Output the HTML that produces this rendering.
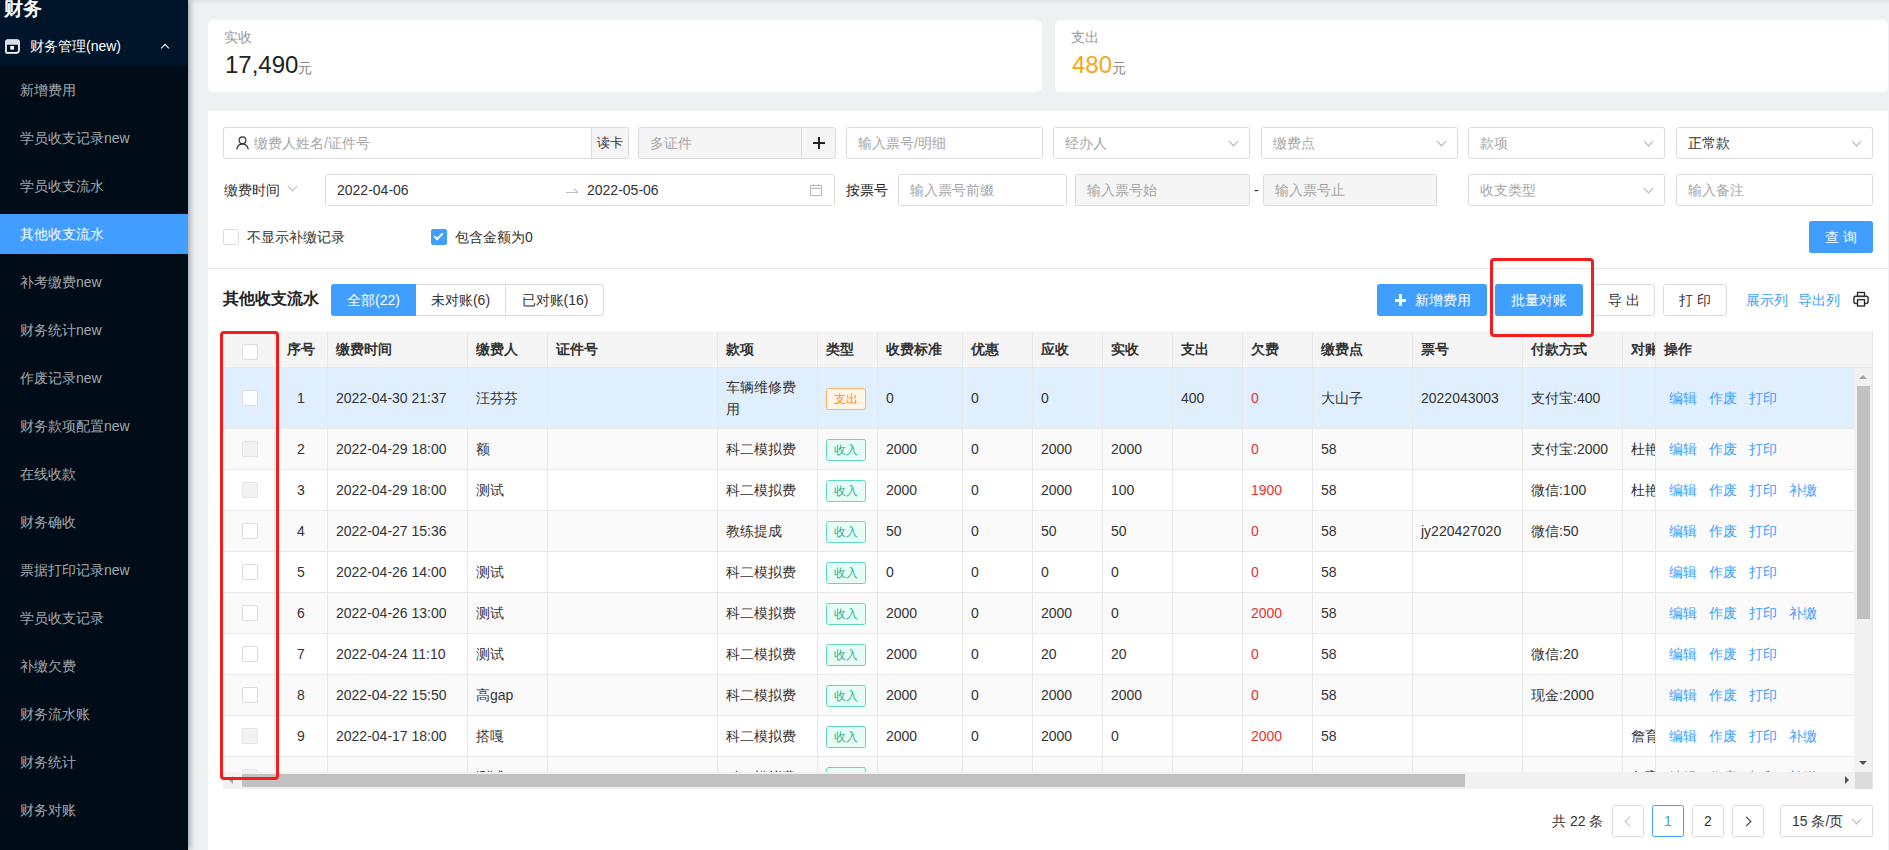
<!DOCTYPE html><html><head><meta charset="utf-8"><style>
*{box-sizing:border-box;margin:0;padding:0}
html,body{width:1889px;height:850px;overflow:hidden}
body{position:relative;background:#eef1f2;font-family:"Liberation Sans",sans-serif;font-size:14px;color:#333}
.abs{position:absolute}
#side{position:absolute;left:0;top:0;width:188px;height:850px;background:#000c17;box-shadow:2px 0 6px rgba(0,21,41,.35);z-index:5}
#side .hd{position:absolute;left:0;top:0;width:188px;height:66px;background:#001529}
.mi{position:absolute;left:0;width:188px;height:40px;line-height:40px;padding-left:20px;color:rgba(255,255,255,.65);font-size:14px;white-space:nowrap}
.mi.on{background:#419dff;color:#fff}
.card{position:absolute;top:20px;height:72px;background:#fff;border-radius:6px}
.card .lb{position:absolute;left:16px;top:9px;font-size:14px;color:#999;line-height:16px}
.card .val{position:absolute;left:17px;top:31px;font-size:24px;line-height:28px;color:#222}
.card .val small{font-size:14px;color:#888}
#panel{position:absolute;left:208px;top:111px;width:1680px;height:739px;background:#fff}
.inp{position:absolute;height:32px;border:1px solid #dcdcdc;border-radius:2.5px;background:#fff;font-size:14px;line-height:30px;padding-left:11px;color:#a6a6a6;white-space:nowrap;overflow:hidden}
.inp.dis{background:#f5f5f5;border-color:#dcdcdc}
.inp.val{color:#333}
.chev{position:absolute;right:12px;top:10px;width:7px;height:7px;border-right:1px solid #b4b4b4;border-bottom:1px solid #b4b4b4;transform:rotate(45deg)}
.btn{position:absolute;height:32px;border-radius:2.5px;font-size:14px;line-height:32px;text-align:center;white-space:nowrap}
.btn.p{background:#409eff;color:#fff}
.btn.d{border:1px solid #dcdcdc;background:#fff;color:#333;line-height:30px}
.cb{position:absolute;width:16px;height:16px;border:1px solid #dcdcdc;border-radius:2px;background:#fff}
.red{position:absolute;border:3px solid #f41c1c;border-radius:4px;z-index:20}
.tcell{position:absolute;white-space:nowrap;overflow:hidden}
.link{color:#409eff}
.tag{display:inline-block;width:40px;height:22px;line-height:20px;font-size:12px;text-align:center;border:1px solid;border-radius:2.5px}
.tag.o{color:#ff8a1c;background:#fff6e8;border-color:#ffb26b}
.tag.g{color:#1db39a;background:#e8fcf6;border-color:#5fd9bf}
</style></head><body>
<div id="side"><div class="hd"></div>
<div class="abs" style="left:4px;top:-2px;font-size:19px;font-weight:bold;color:#fff;line-height:22px">财务</div>
<svg class="abs" style="left:5px;top:39px" width="15" height="15" viewBox="0 0 15 15"><path d="M1 3 Q1 1.2 2.8 1.2 L12.2 1.2 Q14 1.2 14 3 L14 11 Q14 13.8 11.2 13.8 L1.9 13.8 Q1 13.8 1 12.9 Z" fill="none" stroke="#fff" stroke-width="1.7"/><rect x="0.5" y="1" width="14" height="4.8" rx="1.5" fill="#dcdde3"/><rect x="5.3" y="7" width="3.6" height="3.6" fill="#fff"/></svg>
<div class="abs" style="left:30px;top:37px;font-size:14px;line-height:18px;color:#fff;white-space:nowrap">财务管理(new)</div>
<div class="abs" style="left:162px;top:45px;width:6px;height:6px;border-left:1.8px solid #fff;border-top:1.8px solid #fff;transform:rotate(45deg)"></div>
<div class="mi" style="top:70px">新增费用</div>
<div class="mi" style="top:118px">学员收支记录new</div>
<div class="mi" style="top:166px">学员收支流水</div>
<div class="mi on" style="top:214px">其他收支流水</div>
<div class="mi" style="top:262px">补考缴费new</div>
<div class="mi" style="top:310px">财务统计new</div>
<div class="mi" style="top:358px">作废记录new</div>
<div class="mi" style="top:406px">财务款项配置new</div>
<div class="mi" style="top:454px">在线收款</div>
<div class="mi" style="top:502px">财务确收</div>
<div class="mi" style="top:550px">票据打印记录new</div>
<div class="mi" style="top:598px">学员收支记录</div>
<div class="mi" style="top:646px">补缴欠费</div>
<div class="mi" style="top:694px">财务流水账</div>
<div class="mi" style="top:742px">财务统计</div>
<div class="mi" style="top:790px">财务对账</div>
</div>
<div class="abs" style="left:188px;top:0;width:1701px;height:5px;background:linear-gradient(rgba(0,0,0,.06),rgba(0,0,0,0))"></div>
<div class="card" style="left:208px;width:834px"><div class="lb">实收</div><div class="val">17,490<small>元</small></div></div>
<div class="card" style="left:1055px;width:833px"><div class="lb">支出</div><div class="val" style="color:#f5a814">480<small>元</small></div></div>
<div id="panel"></div>
<div class="abs" style="left:208px;top:268px;width:1680px;height:1px;background:#e8e8e8"></div>
<div class="inp" style="left:223px;top:127px;width:406px;padding-left:30px">缴费人姓名/证件号</div>
<svg class="abs" style="left:236px;top:136px" width="13" height="14" viewBox="0 0 13 14"><circle cx="6.5" cy="4.2" r="3.4" fill="none" stroke="#333" stroke-width="1.2"/><path d="M0.8 13.5 C1.2 9.6 3.5 8.2 6.5 8.2 C9.5 8.2 11.8 9.6 12.2 13.5" fill="none" stroke="#333" stroke-width="1.2"/></svg>
<div class="abs" style="left:591px;top:128px;width:37px;height:30px;background:#f5f5f5;border-left:1px solid #dcdcdc;font-size:13px;line-height:30px;text-align:center;color:#333;border-radius:0 3px 3px 0">读卡</div>
<div class="inp dis" style="left:638px;top:127px;width:198px">多证件</div>
<div class="abs" style="left:801px;top:128px;width:34px;height:30px;background:#f5f5f5;border-left:1px solid #dcdcdc;border-radius:0 3px 3px 0"><div class="abs" style="left:11px;top:14px;width:12px;height:2px;background:#222"></div><div class="abs" style="left:16px;top:9px;width:2px;height:12px;background:#222"></div></div>
<div class="inp" style="left:846px;top:127px;width:197px">输入票号/明细</div>
<div class="inp" style="left:1053px;top:127px;width:197px">经办人<div class="chev"></div></div>
<div class="inp" style="left:1261px;top:127px;width:197px">缴费点<div class="chev"></div></div>
<div class="inp" style="left:1468px;top:127px;width:197px">款项<div class="chev"></div></div>
<div class="inp val" style="left:1676px;top:127px;width:197px">正常款<div class="chev"></div></div>
<div class="abs" style="left:224px;top:181px;font-size:14px;line-height:18px;color:#333">缴费时间</div>
<div class="abs" style="left:289px;top:183px;width:7px;height:7px;border-right:1px solid #bbb;border-bottom:1px solid #bbb;transform:rotate(45deg)"></div>
<div class="inp val" style="left:325px;top:174px;width:510px"><span class="abs" style="left:11px">2022-04-06</span><svg class="abs" style="left:239px;top:12px" width="14" height="8" viewBox="0 0 14 8"><path d="M1 5.5 H13 M9 1.8 L13 5.5" fill="none" stroke="#bdbdbd" stroke-width="1.1"/></svg><span class="abs" style="left:261px">2022-05-06</span></div>
<svg class="abs" style="left:809px;top:183px" width="14" height="14" viewBox="0 0 14 14"><rect x="1.5" y="2.5" width="11" height="10" fill="none" stroke="#bbb" stroke-width="1"/><line x1="1.5" y1="5.5" x2="12.5" y2="5.5" stroke="#bbb"/><line x1="4.5" y1="1" x2="4.5" y2="3.5" stroke="#bbb"/><line x1="9.5" y1="1" x2="9.5" y2="3.5" stroke="#bbb"/></svg>
<div class="abs" style="left:846px;top:181px;font-size:14px;line-height:18px;color:#222">按票号</div>
<div class="inp" style="left:898px;top:174px;width:169px">输入票号前缀</div>
<div class="inp dis" style="left:1075px;top:174px;width:175px">输入票号始</div>
<div class="abs" style="left:1254px;top:181px;font-size:14px;line-height:18px;color:#333">-</div>
<div class="inp dis" style="left:1263px;top:174px;width:174px">输入票号止</div>
<div class="inp" style="left:1468px;top:174px;width:197px">收支类型<div class="chev"></div></div>
<div class="inp" style="left:1676px;top:174px;width:197px">输入备注</div>
<div class="cb" style="left:223px;top:229px"></div>
<div class="abs" style="left:247px;top:228px;line-height:18px;color:#333">不显示补缴记录</div>
<div class="cb" style="left:431px;top:229px;background:#409eff;border-color:#409eff"><div class="abs" style="left:4px;top:1px;width:5px;height:9px;border-right:2px solid #fff;border-bottom:2px solid #fff;transform:rotate(45deg)"></div></div>
<div class="abs" style="left:455px;top:228px;line-height:18px;color:#333">包含金额为0</div>
<div class="btn p" style="left:1809px;top:221px;width:64px;letter-spacing:4px;text-indent:4px">查询</div>
<div class="abs" style="left:223px;top:289px;font-size:16px;font-weight:bold;line-height:20px;color:#222">其他收支流水</div>
<div class="abs" style="left:331px;top:284px;width:273px;height:32px;border:1px solid #dcdcdc;border-radius:3px"></div>
<div class="abs" style="left:331px;top:284px;width:85px;height:32px;background:#409eff;color:#fff;line-height:32px;text-align:center;border-radius:3px 0 0 3px">全部(22)</div>
<div class="abs" style="left:416px;top:284px;width:90px;height:32px;line-height:32px;text-align:center;color:#333;border-right:1px solid #dcdcdc">未对账(6)</div>
<div class="abs" style="left:506px;top:284px;width:98px;height:32px;line-height:32px;text-align:center;color:#333">已对账(16)</div>
<div class="btn p" style="left:1377px;top:284px;width:110px;padding-left:22px"><div class="abs" style="left:18px;top:15px;width:11px;height:2.5px;background:#fff"></div><div class="abs" style="left:22.2px;top:10px;width:2.5px;height:12px;background:#fff"></div>新增费用</div>
<div class="btn p" style="left:1495px;top:284px;width:88px">批量对账</div>
<div class="btn d" style="left:1593px;top:284px;width:62px">导 出</div>
<div class="btn d" style="left:1663px;top:284px;width:64px">打 印</div>
<div class="abs link" style="left:1746px;top:291px;line-height:18px">展示列</div>
<div class="abs link" style="left:1798px;top:291px;line-height:18px">导出列</div>
<svg class="abs" style="left:1853px;top:291px" width="16" height="16" viewBox="0 0 16 16"><rect x="4.5" y="1.5" width="7" height="4" fill="none" stroke="#222" stroke-width="1.3"/><rect x="0.9" y="5.2" width="14.2" height="7.2" rx="1.8" fill="none" stroke="#333" stroke-width="1.5"/><rect x="4.5" y="8.7" width="7" height="6.3" fill="#fff" stroke="#222" stroke-width="1.3"/></svg>
<div class="abs" style="left:223px;top:331px;width:1649px;height:37px;background:#f5f5f5;border-bottom:1px solid #e8e8e8"></div>
<div class="abs" style="left:274px;top:331px;width:1px;height:36px;background:#e8e8e8"></div>
<div class="tcell" style="left:275px;top:331px;width:52px;height:36px;line-height:36px;font-weight:bold;color:#333;text-align:center;">序号</div>
<div class="abs" style="left:327px;top:331px;width:1px;height:36px;background:#e8e8e8"></div>
<div class="tcell" style="left:328px;top:331px;width:139px;height:36px;line-height:36px;font-weight:bold;color:#333;padding-left:8px;">缴费时间</div>
<div class="abs" style="left:467px;top:331px;width:1px;height:36px;background:#e8e8e8"></div>
<div class="tcell" style="left:468px;top:331px;width:79px;height:36px;line-height:36px;font-weight:bold;color:#333;padding-left:8px;">缴费人</div>
<div class="abs" style="left:547px;top:331px;width:1px;height:36px;background:#e8e8e8"></div>
<div class="tcell" style="left:548px;top:331px;width:169px;height:36px;line-height:36px;font-weight:bold;color:#333;padding-left:8px;">证件号</div>
<div class="abs" style="left:717px;top:331px;width:1px;height:36px;background:#e8e8e8"></div>
<div class="tcell" style="left:718px;top:331px;width:99px;height:36px;line-height:36px;font-weight:bold;color:#333;padding-left:8px;">款项</div>
<div class="abs" style="left:817px;top:331px;width:1px;height:36px;background:#e8e8e8"></div>
<div class="tcell" style="left:818px;top:331px;width:59px;height:36px;line-height:36px;font-weight:bold;color:#333;padding-left:8px;">类型</div>
<div class="abs" style="left:877px;top:331px;width:1px;height:36px;background:#e8e8e8"></div>
<div class="tcell" style="left:878px;top:331px;width:84px;height:36px;line-height:36px;font-weight:bold;color:#333;padding-left:8px;">收费标准</div>
<div class="abs" style="left:962px;top:331px;width:1px;height:36px;background:#e8e8e8"></div>
<div class="tcell" style="left:963px;top:331px;width:69px;height:36px;line-height:36px;font-weight:bold;color:#333;padding-left:8px;">优惠</div>
<div class="abs" style="left:1032px;top:331px;width:1px;height:36px;background:#e8e8e8"></div>
<div class="tcell" style="left:1033px;top:331px;width:69px;height:36px;line-height:36px;font-weight:bold;color:#333;padding-left:8px;">应收</div>
<div class="abs" style="left:1102px;top:331px;width:1px;height:36px;background:#e8e8e8"></div>
<div class="tcell" style="left:1103px;top:331px;width:69px;height:36px;line-height:36px;font-weight:bold;color:#333;padding-left:8px;">实收</div>
<div class="abs" style="left:1172px;top:331px;width:1px;height:36px;background:#e8e8e8"></div>
<div class="tcell" style="left:1173px;top:331px;width:69px;height:36px;line-height:36px;font-weight:bold;color:#333;padding-left:8px;">支出</div>
<div class="abs" style="left:1242px;top:331px;width:1px;height:36px;background:#e8e8e8"></div>
<div class="tcell" style="left:1243px;top:331px;width:69px;height:36px;line-height:36px;font-weight:bold;color:#333;padding-left:8px;">欠费</div>
<div class="abs" style="left:1312px;top:331px;width:1px;height:36px;background:#e8e8e8"></div>
<div class="tcell" style="left:1313px;top:331px;width:99px;height:36px;line-height:36px;font-weight:bold;color:#333;padding-left:8px;">缴费点</div>
<div class="abs" style="left:1412px;top:331px;width:1px;height:36px;background:#e8e8e8"></div>
<div class="tcell" style="left:1413px;top:331px;width:109px;height:36px;line-height:36px;font-weight:bold;color:#333;padding-left:8px;">票号</div>
<div class="abs" style="left:1522px;top:331px;width:1px;height:36px;background:#e8e8e8"></div>
<div class="tcell" style="left:1523px;top:331px;width:99px;height:36px;line-height:36px;font-weight:bold;color:#333;padding-left:8px;">付款方式</div>
<div class="abs" style="left:1622px;top:331px;width:1px;height:36px;background:#e8e8e8"></div>
<div class="tcell" style="left:1623px;top:331px;width:67px;height:36px;line-height:36px;font-weight:bold;color:#333;padding-left:8px;">对账人</div>
<div class="abs" style="left:1690px;top:331px;width:1px;height:36px;background:#e8e8e8"></div>
<div class="cb" style="left:242px;top:344px"></div>
<div class="abs" style="left:1655px;top:331px;width:217px;height:36px;background:#f5f5f5;border-left:1px solid #e8e8e8;line-height:36px;padding-left:8px;font-weight:bold;color:#333">操作</div>
<div class="abs" style="left:223px;top:368px;width:1632px;height:404px;overflow:hidden">
<div class="abs" style="left:0;top:0px;width:1632px;height:61px;background:#e0effe;border-bottom:1px solid #e8e8e8"></div>
<div class="abs" style="left:51px;top:0px;width:1px;height:61px;background:#e8e8e8"></div>
<div class="cb" style="left:19px;top:22px;"></div>
<div class="abs" style="left:104px;top:0px;width:1px;height:61px;background:#e8e8e8"></div>
<div class="tcell" style="left:52px;top:0px;width:52px;height:60px;line-height:60px;text-align:center;color:#333">1</div>
<div class="abs" style="left:244px;top:0px;width:1px;height:61px;background:#e8e8e8"></div>
<div class="tcell" style="left:105px;top:0px;width:139px;height:60px;line-height:60px;padding-left:8px;color:#333">2022-04-30 21:37</div>
<div class="abs" style="left:324px;top:0px;width:1px;height:61px;background:#e8e8e8"></div>
<div class="tcell" style="left:245px;top:0px;width:79px;height:60px;line-height:60px;padding-left:8px;color:#333">汪芬芬</div>
<div class="abs" style="left:494px;top:0px;width:1px;height:61px;background:#e8e8e8"></div>
<div class="abs" style="left:594px;top:0px;width:1px;height:61px;background:#e8e8e8"></div>
<div class="tcell" style="left:495px;top:0px;width:99px;height:60px;padding-left:8px;color:#333;display:flex;align-items:center"><div style="line-height:22px">车辆维修费<br>用</div></div>
<div class="abs" style="left:654px;top:0px;width:1px;height:61px;background:#e8e8e8"></div>
<div class="tcell" style="left:595px;top:0px;width:59px;height:60px;line-height:60px;padding-left:8px;color:#333"><span class="tag o">支出</span></div>
<div class="abs" style="left:739px;top:0px;width:1px;height:61px;background:#e8e8e8"></div>
<div class="tcell" style="left:655px;top:0px;width:84px;height:60px;line-height:60px;padding-left:8px;color:#333">0</div>
<div class="abs" style="left:809px;top:0px;width:1px;height:61px;background:#e8e8e8"></div>
<div class="tcell" style="left:740px;top:0px;width:69px;height:60px;line-height:60px;padding-left:8px;color:#333">0</div>
<div class="abs" style="left:879px;top:0px;width:1px;height:61px;background:#e8e8e8"></div>
<div class="tcell" style="left:810px;top:0px;width:69px;height:60px;line-height:60px;padding-left:8px;color:#333">0</div>
<div class="abs" style="left:949px;top:0px;width:1px;height:61px;background:#e8e8e8"></div>
<div class="abs" style="left:1019px;top:0px;width:1px;height:61px;background:#e8e8e8"></div>
<div class="tcell" style="left:950px;top:0px;width:69px;height:60px;line-height:60px;padding-left:8px;color:#333">400</div>
<div class="abs" style="left:1089px;top:0px;width:1px;height:61px;background:#e8e8e8"></div>
<div class="tcell" style="left:1020px;top:0px;width:69px;height:60px;line-height:60px;padding-left:8px;color:#e93232">0</div>
<div class="abs" style="left:1189px;top:0px;width:1px;height:61px;background:#e8e8e8"></div>
<div class="tcell" style="left:1090px;top:0px;width:99px;height:60px;line-height:60px;padding-left:8px;color:#333">大山子</div>
<div class="abs" style="left:1299px;top:0px;width:1px;height:61px;background:#e8e8e8"></div>
<div class="tcell" style="left:1190px;top:0px;width:109px;height:60px;line-height:60px;padding-left:8px;color:#333">2022043003</div>
<div class="abs" style="left:1399px;top:0px;width:1px;height:61px;background:#e8e8e8"></div>
<div class="tcell" style="left:1300px;top:0px;width:99px;height:60px;line-height:60px;padding-left:8px;color:#333">支付宝:400</div>
<div class="abs" style="left:1467px;top:0px;width:1px;height:61px;background:#e8e8e8"></div>
<div class="abs link" style="left:1432px;top:0px;width:200px;height:61px;background:#e0effe;border-left:1px solid #e8e8e8;border-bottom:1px solid #e8e8e8;line-height:60px;padding-left:13px;white-space:nowrap"><span style="margin-right:12px">编辑</span><span style="margin-right:12px">作废</span><span style="margin-right:12px">打印</span></div>
<div class="abs" style="left:0;top:61px;width:1632px;height:41px;background:#fafafa;border-bottom:1px solid #e8e8e8"></div>
<div class="abs" style="left:51px;top:61px;width:1px;height:41px;background:#e8e8e8"></div>
<div class="cb" style="left:19px;top:73px;background:#f2f2f2;border-color:#e4e4e4"></div>
<div class="abs" style="left:104px;top:61px;width:1px;height:41px;background:#e8e8e8"></div>
<div class="tcell" style="left:52px;top:61px;width:52px;height:40px;line-height:40px;text-align:center;color:#333">2</div>
<div class="abs" style="left:244px;top:61px;width:1px;height:41px;background:#e8e8e8"></div>
<div class="tcell" style="left:105px;top:61px;width:139px;height:40px;line-height:40px;padding-left:8px;color:#333">2022-04-29 18:00</div>
<div class="abs" style="left:324px;top:61px;width:1px;height:41px;background:#e8e8e8"></div>
<div class="tcell" style="left:245px;top:61px;width:79px;height:40px;line-height:40px;padding-left:8px;color:#333">额</div>
<div class="abs" style="left:494px;top:61px;width:1px;height:41px;background:#e8e8e8"></div>
<div class="abs" style="left:594px;top:61px;width:1px;height:41px;background:#e8e8e8"></div>
<div class="tcell" style="left:495px;top:61px;width:99px;height:40px;line-height:40px;padding-left:8px;color:#333">科二模拟费</div>
<div class="abs" style="left:654px;top:61px;width:1px;height:41px;background:#e8e8e8"></div>
<div class="tcell" style="left:595px;top:61px;width:59px;height:40px;line-height:40px;padding-left:8px;color:#333"><span class="tag g">收入</span></div>
<div class="abs" style="left:739px;top:61px;width:1px;height:41px;background:#e8e8e8"></div>
<div class="tcell" style="left:655px;top:61px;width:84px;height:40px;line-height:40px;padding-left:8px;color:#333">2000</div>
<div class="abs" style="left:809px;top:61px;width:1px;height:41px;background:#e8e8e8"></div>
<div class="tcell" style="left:740px;top:61px;width:69px;height:40px;line-height:40px;padding-left:8px;color:#333">0</div>
<div class="abs" style="left:879px;top:61px;width:1px;height:41px;background:#e8e8e8"></div>
<div class="tcell" style="left:810px;top:61px;width:69px;height:40px;line-height:40px;padding-left:8px;color:#333">2000</div>
<div class="abs" style="left:949px;top:61px;width:1px;height:41px;background:#e8e8e8"></div>
<div class="tcell" style="left:880px;top:61px;width:69px;height:40px;line-height:40px;padding-left:8px;color:#333">2000</div>
<div class="abs" style="left:1019px;top:61px;width:1px;height:41px;background:#e8e8e8"></div>
<div class="abs" style="left:1089px;top:61px;width:1px;height:41px;background:#e8e8e8"></div>
<div class="tcell" style="left:1020px;top:61px;width:69px;height:40px;line-height:40px;padding-left:8px;color:#e93232">0</div>
<div class="abs" style="left:1189px;top:61px;width:1px;height:41px;background:#e8e8e8"></div>
<div class="tcell" style="left:1090px;top:61px;width:99px;height:40px;line-height:40px;padding-left:8px;color:#333">58</div>
<div class="abs" style="left:1299px;top:61px;width:1px;height:41px;background:#e8e8e8"></div>
<div class="abs" style="left:1399px;top:61px;width:1px;height:41px;background:#e8e8e8"></div>
<div class="tcell" style="left:1300px;top:61px;width:99px;height:40px;line-height:40px;padding-left:8px;color:#333">支付宝:2000</div>
<div class="abs" style="left:1467px;top:61px;width:1px;height:41px;background:#e8e8e8"></div>
<div class="tcell" style="left:1400px;top:61px;width:67px;height:40px;line-height:40px;padding-left:8px;color:#333">杜艳</div>
<div class="abs link" style="left:1432px;top:61px;width:200px;height:41px;background:#fafafa;border-left:1px solid #e8e8e8;border-bottom:1px solid #e8e8e8;line-height:40px;padding-left:13px;white-space:nowrap"><span style="margin-right:12px">编辑</span><span style="margin-right:12px">作废</span><span style="margin-right:12px">打印</span></div>
<div class="abs" style="left:0;top:102px;width:1632px;height:41px;background:#fff;border-bottom:1px solid #e8e8e8"></div>
<div class="abs" style="left:51px;top:102px;width:1px;height:41px;background:#e8e8e8"></div>
<div class="cb" style="left:19px;top:114px;background:#f2f2f2;border-color:#e4e4e4"></div>
<div class="abs" style="left:104px;top:102px;width:1px;height:41px;background:#e8e8e8"></div>
<div class="tcell" style="left:52px;top:102px;width:52px;height:40px;line-height:40px;text-align:center;color:#333">3</div>
<div class="abs" style="left:244px;top:102px;width:1px;height:41px;background:#e8e8e8"></div>
<div class="tcell" style="left:105px;top:102px;width:139px;height:40px;line-height:40px;padding-left:8px;color:#333">2022-04-29 18:00</div>
<div class="abs" style="left:324px;top:102px;width:1px;height:41px;background:#e8e8e8"></div>
<div class="tcell" style="left:245px;top:102px;width:79px;height:40px;line-height:40px;padding-left:8px;color:#333">测试</div>
<div class="abs" style="left:494px;top:102px;width:1px;height:41px;background:#e8e8e8"></div>
<div class="abs" style="left:594px;top:102px;width:1px;height:41px;background:#e8e8e8"></div>
<div class="tcell" style="left:495px;top:102px;width:99px;height:40px;line-height:40px;padding-left:8px;color:#333">科二模拟费</div>
<div class="abs" style="left:654px;top:102px;width:1px;height:41px;background:#e8e8e8"></div>
<div class="tcell" style="left:595px;top:102px;width:59px;height:40px;line-height:40px;padding-left:8px;color:#333"><span class="tag g">收入</span></div>
<div class="abs" style="left:739px;top:102px;width:1px;height:41px;background:#e8e8e8"></div>
<div class="tcell" style="left:655px;top:102px;width:84px;height:40px;line-height:40px;padding-left:8px;color:#333">2000</div>
<div class="abs" style="left:809px;top:102px;width:1px;height:41px;background:#e8e8e8"></div>
<div class="tcell" style="left:740px;top:102px;width:69px;height:40px;line-height:40px;padding-left:8px;color:#333">0</div>
<div class="abs" style="left:879px;top:102px;width:1px;height:41px;background:#e8e8e8"></div>
<div class="tcell" style="left:810px;top:102px;width:69px;height:40px;line-height:40px;padding-left:8px;color:#333">2000</div>
<div class="abs" style="left:949px;top:102px;width:1px;height:41px;background:#e8e8e8"></div>
<div class="tcell" style="left:880px;top:102px;width:69px;height:40px;line-height:40px;padding-left:8px;color:#333">100</div>
<div class="abs" style="left:1019px;top:102px;width:1px;height:41px;background:#e8e8e8"></div>
<div class="abs" style="left:1089px;top:102px;width:1px;height:41px;background:#e8e8e8"></div>
<div class="tcell" style="left:1020px;top:102px;width:69px;height:40px;line-height:40px;padding-left:8px;color:#e93232">1900</div>
<div class="abs" style="left:1189px;top:102px;width:1px;height:41px;background:#e8e8e8"></div>
<div class="tcell" style="left:1090px;top:102px;width:99px;height:40px;line-height:40px;padding-left:8px;color:#333">58</div>
<div class="abs" style="left:1299px;top:102px;width:1px;height:41px;background:#e8e8e8"></div>
<div class="abs" style="left:1399px;top:102px;width:1px;height:41px;background:#e8e8e8"></div>
<div class="tcell" style="left:1300px;top:102px;width:99px;height:40px;line-height:40px;padding-left:8px;color:#333">微信:100</div>
<div class="abs" style="left:1467px;top:102px;width:1px;height:41px;background:#e8e8e8"></div>
<div class="tcell" style="left:1400px;top:102px;width:67px;height:40px;line-height:40px;padding-left:8px;color:#333">杜艳</div>
<div class="abs link" style="left:1432px;top:102px;width:200px;height:41px;background:#fff;border-left:1px solid #e8e8e8;border-bottom:1px solid #e8e8e8;line-height:40px;padding-left:13px;white-space:nowrap"><span style="margin-right:12px">编辑</span><span style="margin-right:12px">作废</span><span style="margin-right:12px">打印</span><span style="margin-right:12px">补缴</span></div>
<div class="abs" style="left:0;top:143px;width:1632px;height:41px;background:#fafafa;border-bottom:1px solid #e8e8e8"></div>
<div class="abs" style="left:51px;top:143px;width:1px;height:41px;background:#e8e8e8"></div>
<div class="cb" style="left:19px;top:155px;"></div>
<div class="abs" style="left:104px;top:143px;width:1px;height:41px;background:#e8e8e8"></div>
<div class="tcell" style="left:52px;top:143px;width:52px;height:40px;line-height:40px;text-align:center;color:#333">4</div>
<div class="abs" style="left:244px;top:143px;width:1px;height:41px;background:#e8e8e8"></div>
<div class="tcell" style="left:105px;top:143px;width:139px;height:40px;line-height:40px;padding-left:8px;color:#333">2022-04-27 15:36</div>
<div class="abs" style="left:324px;top:143px;width:1px;height:41px;background:#e8e8e8"></div>
<div class="abs" style="left:494px;top:143px;width:1px;height:41px;background:#e8e8e8"></div>
<div class="abs" style="left:594px;top:143px;width:1px;height:41px;background:#e8e8e8"></div>
<div class="tcell" style="left:495px;top:143px;width:99px;height:40px;line-height:40px;padding-left:8px;color:#333">教练提成</div>
<div class="abs" style="left:654px;top:143px;width:1px;height:41px;background:#e8e8e8"></div>
<div class="tcell" style="left:595px;top:143px;width:59px;height:40px;line-height:40px;padding-left:8px;color:#333"><span class="tag g">收入</span></div>
<div class="abs" style="left:739px;top:143px;width:1px;height:41px;background:#e8e8e8"></div>
<div class="tcell" style="left:655px;top:143px;width:84px;height:40px;line-height:40px;padding-left:8px;color:#333">50</div>
<div class="abs" style="left:809px;top:143px;width:1px;height:41px;background:#e8e8e8"></div>
<div class="tcell" style="left:740px;top:143px;width:69px;height:40px;line-height:40px;padding-left:8px;color:#333">0</div>
<div class="abs" style="left:879px;top:143px;width:1px;height:41px;background:#e8e8e8"></div>
<div class="tcell" style="left:810px;top:143px;width:69px;height:40px;line-height:40px;padding-left:8px;color:#333">50</div>
<div class="abs" style="left:949px;top:143px;width:1px;height:41px;background:#e8e8e8"></div>
<div class="tcell" style="left:880px;top:143px;width:69px;height:40px;line-height:40px;padding-left:8px;color:#333">50</div>
<div class="abs" style="left:1019px;top:143px;width:1px;height:41px;background:#e8e8e8"></div>
<div class="abs" style="left:1089px;top:143px;width:1px;height:41px;background:#e8e8e8"></div>
<div class="tcell" style="left:1020px;top:143px;width:69px;height:40px;line-height:40px;padding-left:8px;color:#e93232">0</div>
<div class="abs" style="left:1189px;top:143px;width:1px;height:41px;background:#e8e8e8"></div>
<div class="tcell" style="left:1090px;top:143px;width:99px;height:40px;line-height:40px;padding-left:8px;color:#333">58</div>
<div class="abs" style="left:1299px;top:143px;width:1px;height:41px;background:#e8e8e8"></div>
<div class="tcell" style="left:1190px;top:143px;width:109px;height:40px;line-height:40px;padding-left:8px;color:#333">jy220427020</div>
<div class="abs" style="left:1399px;top:143px;width:1px;height:41px;background:#e8e8e8"></div>
<div class="tcell" style="left:1300px;top:143px;width:99px;height:40px;line-height:40px;padding-left:8px;color:#333">微信:50</div>
<div class="abs" style="left:1467px;top:143px;width:1px;height:41px;background:#e8e8e8"></div>
<div class="abs link" style="left:1432px;top:143px;width:200px;height:41px;background:#fafafa;border-left:1px solid #e8e8e8;border-bottom:1px solid #e8e8e8;line-height:40px;padding-left:13px;white-space:nowrap"><span style="margin-right:12px">编辑</span><span style="margin-right:12px">作废</span><span style="margin-right:12px">打印</span></div>
<div class="abs" style="left:0;top:184px;width:1632px;height:41px;background:#fff;border-bottom:1px solid #e8e8e8"></div>
<div class="abs" style="left:51px;top:184px;width:1px;height:41px;background:#e8e8e8"></div>
<div class="cb" style="left:19px;top:196px;"></div>
<div class="abs" style="left:104px;top:184px;width:1px;height:41px;background:#e8e8e8"></div>
<div class="tcell" style="left:52px;top:184px;width:52px;height:40px;line-height:40px;text-align:center;color:#333">5</div>
<div class="abs" style="left:244px;top:184px;width:1px;height:41px;background:#e8e8e8"></div>
<div class="tcell" style="left:105px;top:184px;width:139px;height:40px;line-height:40px;padding-left:8px;color:#333">2022-04-26 14:00</div>
<div class="abs" style="left:324px;top:184px;width:1px;height:41px;background:#e8e8e8"></div>
<div class="tcell" style="left:245px;top:184px;width:79px;height:40px;line-height:40px;padding-left:8px;color:#333">测试</div>
<div class="abs" style="left:494px;top:184px;width:1px;height:41px;background:#e8e8e8"></div>
<div class="abs" style="left:594px;top:184px;width:1px;height:41px;background:#e8e8e8"></div>
<div class="tcell" style="left:495px;top:184px;width:99px;height:40px;line-height:40px;padding-left:8px;color:#333">科二模拟费</div>
<div class="abs" style="left:654px;top:184px;width:1px;height:41px;background:#e8e8e8"></div>
<div class="tcell" style="left:595px;top:184px;width:59px;height:40px;line-height:40px;padding-left:8px;color:#333"><span class="tag g">收入</span></div>
<div class="abs" style="left:739px;top:184px;width:1px;height:41px;background:#e8e8e8"></div>
<div class="tcell" style="left:655px;top:184px;width:84px;height:40px;line-height:40px;padding-left:8px;color:#333">0</div>
<div class="abs" style="left:809px;top:184px;width:1px;height:41px;background:#e8e8e8"></div>
<div class="tcell" style="left:740px;top:184px;width:69px;height:40px;line-height:40px;padding-left:8px;color:#333">0</div>
<div class="abs" style="left:879px;top:184px;width:1px;height:41px;background:#e8e8e8"></div>
<div class="tcell" style="left:810px;top:184px;width:69px;height:40px;line-height:40px;padding-left:8px;color:#333">0</div>
<div class="abs" style="left:949px;top:184px;width:1px;height:41px;background:#e8e8e8"></div>
<div class="tcell" style="left:880px;top:184px;width:69px;height:40px;line-height:40px;padding-left:8px;color:#333">0</div>
<div class="abs" style="left:1019px;top:184px;width:1px;height:41px;background:#e8e8e8"></div>
<div class="abs" style="left:1089px;top:184px;width:1px;height:41px;background:#e8e8e8"></div>
<div class="tcell" style="left:1020px;top:184px;width:69px;height:40px;line-height:40px;padding-left:8px;color:#e93232">0</div>
<div class="abs" style="left:1189px;top:184px;width:1px;height:41px;background:#e8e8e8"></div>
<div class="tcell" style="left:1090px;top:184px;width:99px;height:40px;line-height:40px;padding-left:8px;color:#333">58</div>
<div class="abs" style="left:1299px;top:184px;width:1px;height:41px;background:#e8e8e8"></div>
<div class="abs" style="left:1399px;top:184px;width:1px;height:41px;background:#e8e8e8"></div>
<div class="abs" style="left:1467px;top:184px;width:1px;height:41px;background:#e8e8e8"></div>
<div class="abs link" style="left:1432px;top:184px;width:200px;height:41px;background:#fff;border-left:1px solid #e8e8e8;border-bottom:1px solid #e8e8e8;line-height:40px;padding-left:13px;white-space:nowrap"><span style="margin-right:12px">编辑</span><span style="margin-right:12px">作废</span><span style="margin-right:12px">打印</span></div>
<div class="abs" style="left:0;top:225px;width:1632px;height:41px;background:#fafafa;border-bottom:1px solid #e8e8e8"></div>
<div class="abs" style="left:51px;top:225px;width:1px;height:41px;background:#e8e8e8"></div>
<div class="cb" style="left:19px;top:237px;"></div>
<div class="abs" style="left:104px;top:225px;width:1px;height:41px;background:#e8e8e8"></div>
<div class="tcell" style="left:52px;top:225px;width:52px;height:40px;line-height:40px;text-align:center;color:#333">6</div>
<div class="abs" style="left:244px;top:225px;width:1px;height:41px;background:#e8e8e8"></div>
<div class="tcell" style="left:105px;top:225px;width:139px;height:40px;line-height:40px;padding-left:8px;color:#333">2022-04-26 13:00</div>
<div class="abs" style="left:324px;top:225px;width:1px;height:41px;background:#e8e8e8"></div>
<div class="tcell" style="left:245px;top:225px;width:79px;height:40px;line-height:40px;padding-left:8px;color:#333">测试</div>
<div class="abs" style="left:494px;top:225px;width:1px;height:41px;background:#e8e8e8"></div>
<div class="abs" style="left:594px;top:225px;width:1px;height:41px;background:#e8e8e8"></div>
<div class="tcell" style="left:495px;top:225px;width:99px;height:40px;line-height:40px;padding-left:8px;color:#333">科二模拟费</div>
<div class="abs" style="left:654px;top:225px;width:1px;height:41px;background:#e8e8e8"></div>
<div class="tcell" style="left:595px;top:225px;width:59px;height:40px;line-height:40px;padding-left:8px;color:#333"><span class="tag g">收入</span></div>
<div class="abs" style="left:739px;top:225px;width:1px;height:41px;background:#e8e8e8"></div>
<div class="tcell" style="left:655px;top:225px;width:84px;height:40px;line-height:40px;padding-left:8px;color:#333">2000</div>
<div class="abs" style="left:809px;top:225px;width:1px;height:41px;background:#e8e8e8"></div>
<div class="tcell" style="left:740px;top:225px;width:69px;height:40px;line-height:40px;padding-left:8px;color:#333">0</div>
<div class="abs" style="left:879px;top:225px;width:1px;height:41px;background:#e8e8e8"></div>
<div class="tcell" style="left:810px;top:225px;width:69px;height:40px;line-height:40px;padding-left:8px;color:#333">2000</div>
<div class="abs" style="left:949px;top:225px;width:1px;height:41px;background:#e8e8e8"></div>
<div class="tcell" style="left:880px;top:225px;width:69px;height:40px;line-height:40px;padding-left:8px;color:#333">0</div>
<div class="abs" style="left:1019px;top:225px;width:1px;height:41px;background:#e8e8e8"></div>
<div class="abs" style="left:1089px;top:225px;width:1px;height:41px;background:#e8e8e8"></div>
<div class="tcell" style="left:1020px;top:225px;width:69px;height:40px;line-height:40px;padding-left:8px;color:#e93232">2000</div>
<div class="abs" style="left:1189px;top:225px;width:1px;height:41px;background:#e8e8e8"></div>
<div class="tcell" style="left:1090px;top:225px;width:99px;height:40px;line-height:40px;padding-left:8px;color:#333">58</div>
<div class="abs" style="left:1299px;top:225px;width:1px;height:41px;background:#e8e8e8"></div>
<div class="abs" style="left:1399px;top:225px;width:1px;height:41px;background:#e8e8e8"></div>
<div class="abs" style="left:1467px;top:225px;width:1px;height:41px;background:#e8e8e8"></div>
<div class="abs link" style="left:1432px;top:225px;width:200px;height:41px;background:#fafafa;border-left:1px solid #e8e8e8;border-bottom:1px solid #e8e8e8;line-height:40px;padding-left:13px;white-space:nowrap"><span style="margin-right:12px">编辑</span><span style="margin-right:12px">作废</span><span style="margin-right:12px">打印</span><span style="margin-right:12px">补缴</span></div>
<div class="abs" style="left:0;top:266px;width:1632px;height:41px;background:#fff;border-bottom:1px solid #e8e8e8"></div>
<div class="abs" style="left:51px;top:266px;width:1px;height:41px;background:#e8e8e8"></div>
<div class="cb" style="left:19px;top:278px;"></div>
<div class="abs" style="left:104px;top:266px;width:1px;height:41px;background:#e8e8e8"></div>
<div class="tcell" style="left:52px;top:266px;width:52px;height:40px;line-height:40px;text-align:center;color:#333">7</div>
<div class="abs" style="left:244px;top:266px;width:1px;height:41px;background:#e8e8e8"></div>
<div class="tcell" style="left:105px;top:266px;width:139px;height:40px;line-height:40px;padding-left:8px;color:#333">2022-04-24 11:10</div>
<div class="abs" style="left:324px;top:266px;width:1px;height:41px;background:#e8e8e8"></div>
<div class="tcell" style="left:245px;top:266px;width:79px;height:40px;line-height:40px;padding-left:8px;color:#333">测试</div>
<div class="abs" style="left:494px;top:266px;width:1px;height:41px;background:#e8e8e8"></div>
<div class="abs" style="left:594px;top:266px;width:1px;height:41px;background:#e8e8e8"></div>
<div class="tcell" style="left:495px;top:266px;width:99px;height:40px;line-height:40px;padding-left:8px;color:#333">科二模拟费</div>
<div class="abs" style="left:654px;top:266px;width:1px;height:41px;background:#e8e8e8"></div>
<div class="tcell" style="left:595px;top:266px;width:59px;height:40px;line-height:40px;padding-left:8px;color:#333"><span class="tag g">收入</span></div>
<div class="abs" style="left:739px;top:266px;width:1px;height:41px;background:#e8e8e8"></div>
<div class="tcell" style="left:655px;top:266px;width:84px;height:40px;line-height:40px;padding-left:8px;color:#333">2000</div>
<div class="abs" style="left:809px;top:266px;width:1px;height:41px;background:#e8e8e8"></div>
<div class="tcell" style="left:740px;top:266px;width:69px;height:40px;line-height:40px;padding-left:8px;color:#333">0</div>
<div class="abs" style="left:879px;top:266px;width:1px;height:41px;background:#e8e8e8"></div>
<div class="tcell" style="left:810px;top:266px;width:69px;height:40px;line-height:40px;padding-left:8px;color:#333">20</div>
<div class="abs" style="left:949px;top:266px;width:1px;height:41px;background:#e8e8e8"></div>
<div class="tcell" style="left:880px;top:266px;width:69px;height:40px;line-height:40px;padding-left:8px;color:#333">20</div>
<div class="abs" style="left:1019px;top:266px;width:1px;height:41px;background:#e8e8e8"></div>
<div class="abs" style="left:1089px;top:266px;width:1px;height:41px;background:#e8e8e8"></div>
<div class="tcell" style="left:1020px;top:266px;width:69px;height:40px;line-height:40px;padding-left:8px;color:#e93232">0</div>
<div class="abs" style="left:1189px;top:266px;width:1px;height:41px;background:#e8e8e8"></div>
<div class="tcell" style="left:1090px;top:266px;width:99px;height:40px;line-height:40px;padding-left:8px;color:#333">58</div>
<div class="abs" style="left:1299px;top:266px;width:1px;height:41px;background:#e8e8e8"></div>
<div class="abs" style="left:1399px;top:266px;width:1px;height:41px;background:#e8e8e8"></div>
<div class="tcell" style="left:1300px;top:266px;width:99px;height:40px;line-height:40px;padding-left:8px;color:#333">微信:20</div>
<div class="abs" style="left:1467px;top:266px;width:1px;height:41px;background:#e8e8e8"></div>
<div class="abs link" style="left:1432px;top:266px;width:200px;height:41px;background:#fff;border-left:1px solid #e8e8e8;border-bottom:1px solid #e8e8e8;line-height:40px;padding-left:13px;white-space:nowrap"><span style="margin-right:12px">编辑</span><span style="margin-right:12px">作废</span><span style="margin-right:12px">打印</span></div>
<div class="abs" style="left:0;top:307px;width:1632px;height:41px;background:#fafafa;border-bottom:1px solid #e8e8e8"></div>
<div class="abs" style="left:51px;top:307px;width:1px;height:41px;background:#e8e8e8"></div>
<div class="cb" style="left:19px;top:319px;"></div>
<div class="abs" style="left:104px;top:307px;width:1px;height:41px;background:#e8e8e8"></div>
<div class="tcell" style="left:52px;top:307px;width:52px;height:40px;line-height:40px;text-align:center;color:#333">8</div>
<div class="abs" style="left:244px;top:307px;width:1px;height:41px;background:#e8e8e8"></div>
<div class="tcell" style="left:105px;top:307px;width:139px;height:40px;line-height:40px;padding-left:8px;color:#333">2022-04-22 15:50</div>
<div class="abs" style="left:324px;top:307px;width:1px;height:41px;background:#e8e8e8"></div>
<div class="tcell" style="left:245px;top:307px;width:79px;height:40px;line-height:40px;padding-left:8px;color:#333">高gap</div>
<div class="abs" style="left:494px;top:307px;width:1px;height:41px;background:#e8e8e8"></div>
<div class="abs" style="left:594px;top:307px;width:1px;height:41px;background:#e8e8e8"></div>
<div class="tcell" style="left:495px;top:307px;width:99px;height:40px;line-height:40px;padding-left:8px;color:#333">科二模拟费</div>
<div class="abs" style="left:654px;top:307px;width:1px;height:41px;background:#e8e8e8"></div>
<div class="tcell" style="left:595px;top:307px;width:59px;height:40px;line-height:40px;padding-left:8px;color:#333"><span class="tag g">收入</span></div>
<div class="abs" style="left:739px;top:307px;width:1px;height:41px;background:#e8e8e8"></div>
<div class="tcell" style="left:655px;top:307px;width:84px;height:40px;line-height:40px;padding-left:8px;color:#333">2000</div>
<div class="abs" style="left:809px;top:307px;width:1px;height:41px;background:#e8e8e8"></div>
<div class="tcell" style="left:740px;top:307px;width:69px;height:40px;line-height:40px;padding-left:8px;color:#333">0</div>
<div class="abs" style="left:879px;top:307px;width:1px;height:41px;background:#e8e8e8"></div>
<div class="tcell" style="left:810px;top:307px;width:69px;height:40px;line-height:40px;padding-left:8px;color:#333">2000</div>
<div class="abs" style="left:949px;top:307px;width:1px;height:41px;background:#e8e8e8"></div>
<div class="tcell" style="left:880px;top:307px;width:69px;height:40px;line-height:40px;padding-left:8px;color:#333">2000</div>
<div class="abs" style="left:1019px;top:307px;width:1px;height:41px;background:#e8e8e8"></div>
<div class="abs" style="left:1089px;top:307px;width:1px;height:41px;background:#e8e8e8"></div>
<div class="tcell" style="left:1020px;top:307px;width:69px;height:40px;line-height:40px;padding-left:8px;color:#e93232">0</div>
<div class="abs" style="left:1189px;top:307px;width:1px;height:41px;background:#e8e8e8"></div>
<div class="tcell" style="left:1090px;top:307px;width:99px;height:40px;line-height:40px;padding-left:8px;color:#333">58</div>
<div class="abs" style="left:1299px;top:307px;width:1px;height:41px;background:#e8e8e8"></div>
<div class="abs" style="left:1399px;top:307px;width:1px;height:41px;background:#e8e8e8"></div>
<div class="tcell" style="left:1300px;top:307px;width:99px;height:40px;line-height:40px;padding-left:8px;color:#333">现金:2000</div>
<div class="abs" style="left:1467px;top:307px;width:1px;height:41px;background:#e8e8e8"></div>
<div class="abs link" style="left:1432px;top:307px;width:200px;height:41px;background:#fafafa;border-left:1px solid #e8e8e8;border-bottom:1px solid #e8e8e8;line-height:40px;padding-left:13px;white-space:nowrap"><span style="margin-right:12px">编辑</span><span style="margin-right:12px">作废</span><span style="margin-right:12px">打印</span></div>
<div class="abs" style="left:0;top:348px;width:1632px;height:41px;background:#fff;border-bottom:1px solid #e8e8e8"></div>
<div class="abs" style="left:51px;top:348px;width:1px;height:41px;background:#e8e8e8"></div>
<div class="cb" style="left:19px;top:360px;background:#f2f2f2;border-color:#e4e4e4"></div>
<div class="abs" style="left:104px;top:348px;width:1px;height:41px;background:#e8e8e8"></div>
<div class="tcell" style="left:52px;top:348px;width:52px;height:40px;line-height:40px;text-align:center;color:#333">9</div>
<div class="abs" style="left:244px;top:348px;width:1px;height:41px;background:#e8e8e8"></div>
<div class="tcell" style="left:105px;top:348px;width:139px;height:40px;line-height:40px;padding-left:8px;color:#333">2022-04-17 18:00</div>
<div class="abs" style="left:324px;top:348px;width:1px;height:41px;background:#e8e8e8"></div>
<div class="tcell" style="left:245px;top:348px;width:79px;height:40px;line-height:40px;padding-left:8px;color:#333">搭嘎</div>
<div class="abs" style="left:494px;top:348px;width:1px;height:41px;background:#e8e8e8"></div>
<div class="abs" style="left:594px;top:348px;width:1px;height:41px;background:#e8e8e8"></div>
<div class="tcell" style="left:495px;top:348px;width:99px;height:40px;line-height:40px;padding-left:8px;color:#333">科二模拟费</div>
<div class="abs" style="left:654px;top:348px;width:1px;height:41px;background:#e8e8e8"></div>
<div class="tcell" style="left:595px;top:348px;width:59px;height:40px;line-height:40px;padding-left:8px;color:#333"><span class="tag g">收入</span></div>
<div class="abs" style="left:739px;top:348px;width:1px;height:41px;background:#e8e8e8"></div>
<div class="tcell" style="left:655px;top:348px;width:84px;height:40px;line-height:40px;padding-left:8px;color:#333">2000</div>
<div class="abs" style="left:809px;top:348px;width:1px;height:41px;background:#e8e8e8"></div>
<div class="tcell" style="left:740px;top:348px;width:69px;height:40px;line-height:40px;padding-left:8px;color:#333">0</div>
<div class="abs" style="left:879px;top:348px;width:1px;height:41px;background:#e8e8e8"></div>
<div class="tcell" style="left:810px;top:348px;width:69px;height:40px;line-height:40px;padding-left:8px;color:#333">2000</div>
<div class="abs" style="left:949px;top:348px;width:1px;height:41px;background:#e8e8e8"></div>
<div class="tcell" style="left:880px;top:348px;width:69px;height:40px;line-height:40px;padding-left:8px;color:#333">0</div>
<div class="abs" style="left:1019px;top:348px;width:1px;height:41px;background:#e8e8e8"></div>
<div class="abs" style="left:1089px;top:348px;width:1px;height:41px;background:#e8e8e8"></div>
<div class="tcell" style="left:1020px;top:348px;width:69px;height:40px;line-height:40px;padding-left:8px;color:#e93232">2000</div>
<div class="abs" style="left:1189px;top:348px;width:1px;height:41px;background:#e8e8e8"></div>
<div class="tcell" style="left:1090px;top:348px;width:99px;height:40px;line-height:40px;padding-left:8px;color:#333">58</div>
<div class="abs" style="left:1299px;top:348px;width:1px;height:41px;background:#e8e8e8"></div>
<div class="abs" style="left:1399px;top:348px;width:1px;height:41px;background:#e8e8e8"></div>
<div class="abs" style="left:1467px;top:348px;width:1px;height:41px;background:#e8e8e8"></div>
<div class="tcell" style="left:1400px;top:348px;width:67px;height:40px;line-height:40px;padding-left:8px;color:#333">詹育</div>
<div class="abs link" style="left:1432px;top:348px;width:200px;height:41px;background:#fff;border-left:1px solid #e8e8e8;border-bottom:1px solid #e8e8e8;line-height:40px;padding-left:13px;white-space:nowrap"><span style="margin-right:12px">编辑</span><span style="margin-right:12px">作废</span><span style="margin-right:12px">打印</span><span style="margin-right:12px">补缴</span></div>
<div class="abs" style="left:0;top:389px;width:1632px;height:41px;background:#fafafa;border-bottom:1px solid #e8e8e8"></div>
<div class="abs" style="left:51px;top:389px;width:1px;height:41px;background:#e8e8e8"></div>
<div class="cb" style="left:19px;top:401px;background:#f2f2f2;border-color:#e4e4e4"></div>
<div class="abs" style="left:104px;top:389px;width:1px;height:41px;background:#e8e8e8"></div>
<div class="tcell" style="left:52px;top:389px;width:52px;height:40px;line-height:40px;text-align:center;color:#333">10</div>
<div class="abs" style="left:244px;top:389px;width:1px;height:41px;background:#e8e8e8"></div>
<div class="tcell" style="left:105px;top:389px;width:139px;height:40px;line-height:40px;padding-left:8px;color:#333">2022-04-16 18:00</div>
<div class="abs" style="left:324px;top:389px;width:1px;height:41px;background:#e8e8e8"></div>
<div class="tcell" style="left:245px;top:389px;width:79px;height:40px;line-height:40px;padding-left:8px;color:#333">测试</div>
<div class="abs" style="left:494px;top:389px;width:1px;height:41px;background:#e8e8e8"></div>
<div class="abs" style="left:594px;top:389px;width:1px;height:41px;background:#e8e8e8"></div>
<div class="tcell" style="left:495px;top:389px;width:99px;height:40px;line-height:40px;padding-left:8px;color:#333">科二模拟费</div>
<div class="abs" style="left:654px;top:389px;width:1px;height:41px;background:#e8e8e8"></div>
<div class="tcell" style="left:595px;top:389px;width:59px;height:40px;line-height:40px;padding-left:8px;color:#333"><span class="tag g">收入</span></div>
<div class="abs" style="left:739px;top:389px;width:1px;height:41px;background:#e8e8e8"></div>
<div class="tcell" style="left:655px;top:389px;width:84px;height:40px;line-height:40px;padding-left:8px;color:#333">2000</div>
<div class="abs" style="left:809px;top:389px;width:1px;height:41px;background:#e8e8e8"></div>
<div class="tcell" style="left:740px;top:389px;width:69px;height:40px;line-height:40px;padding-left:8px;color:#333">0</div>
<div class="abs" style="left:879px;top:389px;width:1px;height:41px;background:#e8e8e8"></div>
<div class="tcell" style="left:810px;top:389px;width:69px;height:40px;line-height:40px;padding-left:8px;color:#333">2000</div>
<div class="abs" style="left:949px;top:389px;width:1px;height:41px;background:#e8e8e8"></div>
<div class="tcell" style="left:880px;top:389px;width:69px;height:40px;line-height:40px;padding-left:8px;color:#333">0</div>
<div class="abs" style="left:1019px;top:389px;width:1px;height:41px;background:#e8e8e8"></div>
<div class="abs" style="left:1089px;top:389px;width:1px;height:41px;background:#e8e8e8"></div>
<div class="tcell" style="left:1020px;top:389px;width:69px;height:40px;line-height:40px;padding-left:8px;color:#e93232">2000</div>
<div class="abs" style="left:1189px;top:389px;width:1px;height:41px;background:#e8e8e8"></div>
<div class="tcell" style="left:1090px;top:389px;width:99px;height:40px;line-height:40px;padding-left:8px;color:#333">58</div>
<div class="abs" style="left:1299px;top:389px;width:1px;height:41px;background:#e8e8e8"></div>
<div class="abs" style="left:1399px;top:389px;width:1px;height:41px;background:#e8e8e8"></div>
<div class="abs" style="left:1467px;top:389px;width:1px;height:41px;background:#e8e8e8"></div>
<div class="tcell" style="left:1400px;top:389px;width:67px;height:40px;line-height:40px;padding-left:8px;color:#333">詹育</div>
<div class="abs link" style="left:1432px;top:389px;width:200px;height:41px;background:#fafafa;border-left:1px solid #e8e8e8;border-bottom:1px solid #e8e8e8;line-height:40px;padding-left:13px;white-space:nowrap"><span style="margin-right:12px">编辑</span><span style="margin-right:12px">作废</span><span style="margin-right:12px">打印</span><span style="margin-right:12px">补缴</span></div>
</div>
<div class="abs" style="left:1854px;top:368px;width:18px;height:404px;background:#f1f1f1"></div>
<div class="abs" style="left:1872px;top:331px;width:1px;height:458px;background:#e4e4e4"></div>
<div class="abs" style="left:1857px;top:386px;width:13px;height:233px;background:#c1c1c1"></div>
<div class="abs" style="left:1859px;top:375px;width:0;height:0;border-left:4px solid transparent;border-right:4px solid transparent;border-bottom:4px solid #a3a3a3"></div>
<div class="abs" style="left:1859px;top:761px;width:0;height:0;border-left:4px solid transparent;border-right:4px solid transparent;border-top:4px solid #505050"></div>
<div class="abs" style="left:223px;top:772px;width:1632px;height:17px;background:#f1f1f1"></div>
<div class="abs" style="left:242px;top:774px;width:1223px;height:13px;background:#c1c1c1"></div>
<div class="abs" style="left:229px;top:776px;width:0;height:0;border-top:4px solid transparent;border-bottom:4px solid transparent;border-right:4px solid #a3a3a3"></div>
<div class="abs" style="left:1845px;top:776px;width:0;height:0;border-top:4px solid transparent;border-bottom:4px solid transparent;border-left:4px solid #505050"></div>
<div class="abs" style="left:1855px;top:772px;width:17px;height:17px;background:#dcdcdc"></div>
<div class="red" style="left:220px;top:331px;width:59px;height:449px"></div>
<div class="red" style="left:1490px;top:258px;width:104px;height:79px"></div>
<div class="abs" style="left:1552px;top:812px;line-height:18px;color:#333">共 22 条</div>
<div class="btn d" style="left:1612px;top:805px;width:32px"><div class="abs" style="left:13px;top:12px;width:7px;height:7px;border-left:1px solid #c0c4cc;border-bottom:1px solid #c0c4cc;transform:rotate(45deg)"></div></div>
<div class="btn d" style="left:1652px;top:805px;width:32px;border-color:#409eff;color:#409eff">1</div>
<div class="btn d" style="left:1692px;top:805px;width:32px">2</div>
<div class="btn d" style="left:1732px;top:805px;width:32px"><div class="abs" style="left:10px;top:12px;width:7px;height:7px;border-right:1.5px solid #333;border-top:1.5px solid #333;transform:rotate(45deg)"></div></div>
<div class="inp val" style="left:1780px;top:805px;width:93px">15 条/页<div class="chev"></div></div>
</body></html>
